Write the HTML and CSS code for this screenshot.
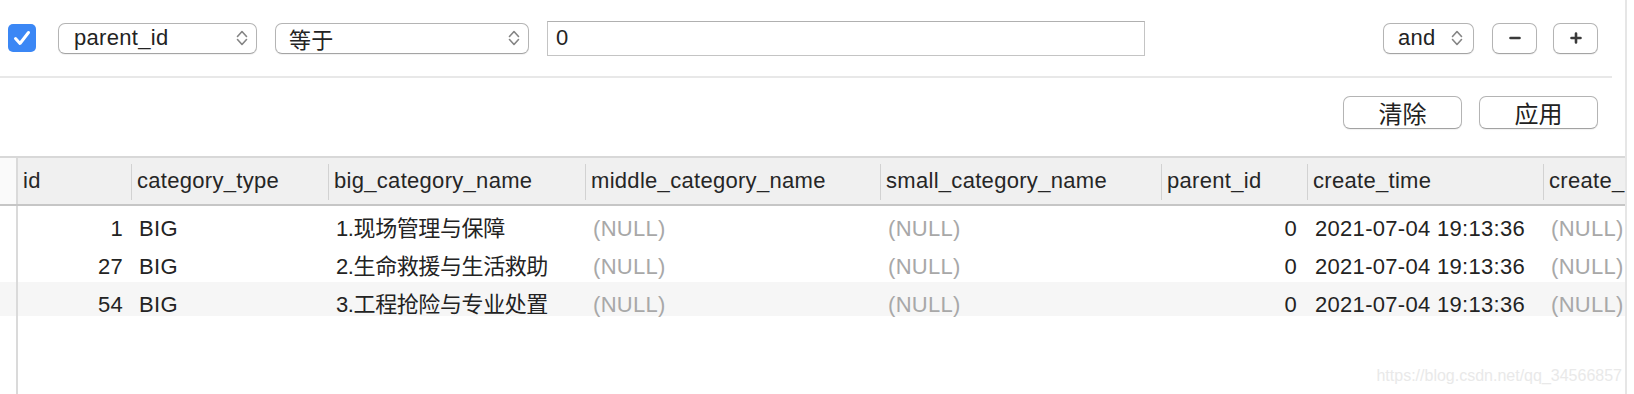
FILE: index.html
```html
<!DOCTYPE html>
<html lang="zh-CN">
<head>
<meta charset="utf-8">
<title>Filter</title>
<link rel="stylesheet" href="styles.css">
</head>
<body>
<div class="main">
  <div class="filter-row">
    <div class="checkbox">
      <svg width="28" height="28" viewBox="0 0 28 28"><path d="M7.5 14.5 L12 19.5 L20.5 8.5" fill="none" stroke="#fff" stroke-width="3" stroke-linecap="round" stroke-linejoin="round"/></svg>
    </div>
    <div class="select sel-field"><span>parent_id</span>
      <svg class="chev" width="14" height="20" viewBox="0 0 14 20"><path d="M2.5 8.5 L7 3.5 L11.5 8.5 M2.5 11.5 L7 16.5 L11.5 11.5" fill="none" stroke="#858585" stroke-width="1.6" stroke-linecap="round" stroke-linejoin="round"/></svg>
    </div>
    <div class="select sel-op"><span>等于</span>
      <svg class="chev" width="14" height="20" viewBox="0 0 14 20"><path d="M2.5 8.5 L7 3.5 L11.5 8.5 M2.5 11.5 L7 16.5 L11.5 11.5" fill="none" stroke="#858585" stroke-width="1.6" stroke-linecap="round" stroke-linejoin="round"/></svg>
    </div>
    <div class="text-input">0</div>
    <div class="select sel-and"><span>and</span>
      <svg class="chev" width="14" height="20" viewBox="0 0 14 20"><path d="M2.5 8.5 L7 3.5 L11.5 8.5 M2.5 11.5 L7 16.5 L11.5 11.5" fill="none" stroke="#858585" stroke-width="1.6" stroke-linecap="round" stroke-linejoin="round"/></svg>
    </div>
    <div class="btn-sm">
      <svg width="12" height="12" viewBox="0 0 12 12"><path d="M1.5 6 H10.5" stroke="#3a3a3a" stroke-width="2.6" stroke-linecap="round"/></svg>
    </div>
    <div class="btn-sm btn-plus">
      <svg width="12" height="12" viewBox="0 0 12 12"><path d="M1.5 6 H10.5 M6 1.5 V10.5" stroke="#3a3a3a" stroke-width="2.6" stroke-linecap="round"/></svg>
    </div>
  </div>
  <div class="separator"></div>
  <div class="action-row">
    <div class="btn">清除</div>
    <div class="btn">应用</div>
  </div>
  <div class="table">
    <div class="thead">
      <div class="gutter"></div>
      <div class="th c-id">id</div>
      <div class="th c-type">category_type</div>
      <div class="th c-big">big_category_name</div>
      <div class="th c-mid">middle_category_name</div>
      <div class="th c-small">small_category_name</div>
      <div class="th c-pid">parent_id</div>
      <div class="th c-time">create_time</div>
      <div class="th c-user">create_user</div>
    </div>
    <div class="tbody">
      <div class="tr">
        <div class="gutter"></div>
        <div class="td c-id num">1</div>
        <div class="td c-type">BIG</div>
        <div class="td c-big cjk">1.现场管理与保障</div>
        <div class="td c-mid null">(NULL)</div>
        <div class="td c-small null">(NULL)</div>
        <div class="td c-pid num">0</div>
        <div class="td c-time">2021-07-04 19:13:36</div>
        <div class="td c-user null">(NULL)</div>
      </div>
      <div class="tr">
        <div class="gutter"></div>
        <div class="td c-id num">27</div>
        <div class="td c-type">BIG</div>
        <div class="td c-big cjk">2.生命救援与生活救助</div>
        <div class="td c-mid null">(NULL)</div>
        <div class="td c-small null">(NULL)</div>
        <div class="td c-pid num">0</div>
        <div class="td c-time">2021-07-04 19:13:36</div>
        <div class="td c-user null">(NULL)</div>
      </div>
      <div class="tr tr-alt">
        <div class="gutter"></div>
        <div class="td c-id num">54</div>
        <div class="td c-type">BIG</div>
        <div class="td c-big cjk">3.工程抢险与专业处置</div>
        <div class="td c-mid null">(NULL)</div>
        <div class="td c-small null">(NULL)</div>
        <div class="td c-pid num">0</div>
        <div class="td c-time">2021-07-04 19:13:36</div>
        <div class="td c-user null">(NULL)</div>
      </div>
      <div class="filler"><div class="gutter"></div></div>
    </div>
  </div>
  <div class="watermark">https://blog.csdn.net/qq_34566857</div>
</div>
</body>
</html>
```

FILE: styles.css
```css
* { box-sizing: border-box; }

html, body {
  margin: 0;
  padding: 0;
  background: #ffffff;
}

body {
  width: 1634px;
  height: 394px;
  overflow: hidden;
  font-family: "Liberation Sans", "Noto Sans CJK SC", sans-serif;
  font-size: 22px;
  color: #232323;
}

.main {
  position: relative;
  width: 1627px;
  height: 394px;
  border-right: 2px solid #e6e6e6;
  display: flex;
  flex-direction: column;
  overflow: hidden;
}

/* ---------- filter row ---------- */
.filter-row {
  height: 76px;
  flex: none;
  display: flex;
  align-items: center;
  gap: 18px;
  padding: 0 27px 0 8px;
  letter-spacing: 0.3px;
}

.checkbox {
  width: 28px;
  height: 28px;
  border-radius: 5px;
  background: #3b87f5;
  margin-right: 4px;
  display: flex;
}

.select {
  height: 31px;
  display: flex;
  align-items: center;
  justify-content: space-between;
  border: 1px solid #b4b4b4;
  border-bottom-color: #a4a4a4;
  border-radius: 7px;
  background: #fff;
  box-shadow: 0 1px 1px rgba(0, 0, 0, 0.06);
  padding: 0 7px 0 14px;
}

.sel-field { width: 199px; padding-left: 15px; }
.sel-op { width: 254px; padding-left: 13px; }
.sel-and { width: 91px; margin-left: auto; padding-right: 9px; }

.chev { flex: none; }

.text-input {
  width: 598px;
  height: 35px;
  border: 1px solid #c4c4c4;
  border-top-color: #b0b0b0;
  background: #fff;
  padding-left: 8px;
  display: flex;
  align-items: center;
}

.btn-sm {
  width: 45px;
  height: 31px;
  border: 1px solid #b4b4b4;
  border-bottom-color: #a4a4a4;
  border-radius: 7px;
  background: #fff;
  box-shadow: 0 1px 1px rgba(0, 0, 0, 0.06);
  display: flex;
  align-items: center;
  justify-content: center;
}

.btn-plus { margin-left: -2px; }

.separator {
  height: 2px;
  flex: none;
  background: #e8e8e8;
  margin-right: 13px;
}

/* ---------- action row ---------- */
.action-row {
  flex: none;
  display: flex;
  justify-content: flex-end;
  gap: 17px;
  padding: 18px 27px 27px 0;
}

.btn {
  width: 119px;
  height: 33px;
  border: 1px solid #b4b4b4;
  border-bottom-color: #a2a2a2;
  border-radius: 7px;
  background: #fff;
  box-shadow: 0 1px 1px rgba(0, 0, 0, 0.06);
  display: flex;
  align-items: center;
  justify-content: center;
  font-size: 24px;
  color: #222;
}

/* ---------- table ---------- */
.table {
  flex: 1;
  display: flex;
  flex-direction: column;
  border-top: 2px solid #d8d8d8;
  letter-spacing: 0.3px;
  min-height: 0;
}

.thead {
  flex: none;
  display: flex;
  height: 48px;
  background: #f0f0f0;
  border-bottom: 2px solid #c6c6c6;
}

.thead .gutter {
  background: #fafafa;
  height: 46px;
}

.gutter {
  flex: none;
  width: 18px;
  border-right: 2px solid #dadada;
}

.th {
  flex: none;
  height: 36px;
  margin-top: 6px;
  line-height: 34px;
  padding-left: 5px;
  border-left: 1px solid #d2d2d2;
  white-space: nowrap;
  color: #262626;
}

.th.c-id { border-left: none; }

.c-id { width: 113px; }
.c-type { width: 197px; }
.c-big { width: 257px; }
.c-mid { width: 295px; }
.c-small { width: 281px; }
.c-pid { width: 146px; }
.c-time { width: 236px; }
.c-user { width: 120px; }

.tbody {
  flex: 1;
  display: flex;
  flex-direction: column;
}

.tr {
  flex: none;
  display: flex;
  height: 38px;
}

.tr-alt {
  height: 34px;
  background: #f6f6f6;
}

.td {
  flex: none;
  padding: 6px 0 0 8px;
  line-height: 33px;
  white-space: nowrap;
}

.td.num {
  text-align: right;
  padding-left: 0;
  padding-right: 8px;
}

.td.c-pid.num { padding-right: 10px; }

.cjk { letter-spacing: -0.4px; }

.null { color: #a8a8a8; }

.filler {
  flex: 1;
  display: flex;
}

.watermark {
  position: absolute;
  right: 3px;
  bottom: 9px;
  font-size: 16px;
  color: #e9e9e9;
  letter-spacing: 0;
}
```
